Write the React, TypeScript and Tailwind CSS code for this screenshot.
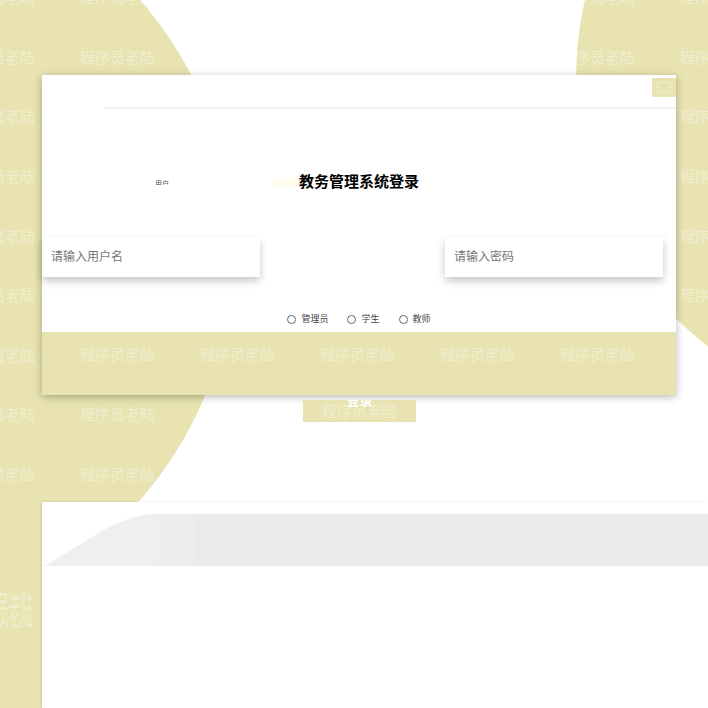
import React from "react";

// Login screen for the academic affairs system, with the repeated watermark over the yellow background blobs.

const YELLOW = "bg-[#e8e3b1]";
const WM_ROWS = 9;
const WM_COLS = 7;
const WATERMARK = "程序员老陆";

function WatermarkGrid() {
  return (
    <div className="absolute left-0 top-0 w-[708px] h-[502px] overflow-hidden pointer-events-none">
      <div className="flex flex-col mt-[-32px] ml-[-40px]">
        {Array.from({ length: WM_ROWS }).map((_, r) => (
          <div key={r} className="flex h-[59.6px] items-center">
            {Array.from({ length: WM_COLS }).map((_, c) => (
              <span
                key={c}
                className="w-[120px] shrink-0 text-[15px] leading-[15px] text-white/40 whitespace-nowrap"
              >
                {WATERMARK}
              </span>
            ))}
          </div>
        ))}
      </div>
    </div>
  );
}

function Radio({ label, last }: { label: string; last?: boolean }) {
  return (
    <label className={`flex items-center ${last ? "" : "mr-[19px]"}`}>
      <span className="w-[9px] h-[9px] rounded-full border border-[#666] bg-white" />
      <span className="ml-[5px] text-[9px] leading-[10px] text-[#444]">{label}</span>
    </label>
  );
}

function LoginCard() {
  return (
    <div className="w-[634px] h-[320px] flex flex-col bg-white shadow-[0_2px_8px_rgba(0,0,0,0.28)]">
      <div className="h-[257px] flex flex-col">
        <div className="h-[32px] flex justify-end">
          <div className={`mt-[3px] w-[24px] h-[19px] ${YELLOW} flex items-center justify-center`}>
            <span className="w-[14px] h-[11px] border border-white/40" />
          </div>
        </div>
        <div className="ml-[63px] h-[2px] bg-[#f1f1f1]" />

        <div className="mt-[63px] h-[20px] flex items-center pl-[113px]">
          <span className="w-[117px] text-[7px] leading-[7px] text-[#555] overflow-hidden h-[5px]">
            用户
          </span>
          <span className="w-[27px] h-[8px] bg-[#fffdf0]" />
          <h1 className="text-[15px] leading-[20px] font-bold text-black">教务管理系统登录</h1>
        </div>

        <div className="mt-[45px] flex justify-between pr-[13px]">
          <div className="w-[218px] h-[40px] bg-white shadow-[0_4px_8px_rgba(0,0,0,0.22)] flex items-center pl-[9px]">
            <span className="text-[12px] text-[#777]">请输入用户名</span>
          </div>
          <div className="w-[218px] h-[40px] bg-white shadow-[0_4px_8px_rgba(0,0,0,0.22)] flex items-center pl-[9px]">
            <span className="text-[12px] text-[#777]">请输入密码</span>
          </div>
        </div>

        <div className="mt-[37px] flex justify-center">
          <Radio label="管理员" />
          <Radio label="学生" />
          <Radio label="教师" last />
        </div>
      </div>

      <div className={`h-[63px] ${YELLOW} flex items-start pt-[15px] pl-[38px]`}>
        {[0, 1, 2, 3, 4].map((i) => (
          <span key={i} className="w-[120px] shrink-0 text-[15px] leading-[15px] text-white/40 whitespace-nowrap">
            {WATERMARK}
          </span>
        ))}
      </div>
    </div>
  );
}

export default function App() {
  return (
    <div
      className="relative w-[708px] h-[708px] overflow-hidden bg-white"
      style={{ fontFamily: '"Liberation Sans", "Noto Sans CJK SC", sans-serif' }}
    >
      {/* background blobs */}
      <div className={`absolute left-[-526px] top-[-130px] w-[760px] h-[760px] rounded-full ${YELLOW}`} />
      <div className={`absolute left-[576px] top-[-261px] w-[678px] h-[678px] rounded-full ${YELLOW}`} />
      <div className={`absolute left-0 top-0 w-[42px] h-[708px] ${YELLOW}`} />
      <WatermarkGrid />
      <span className="absolute left-[-3px] top-[592px] text-[12px] leading-[12px] text-white/40 scale-y-[3.3] origin-top whitespace-nowrap">
        员老陆
      </span>

      <div className="relative flex flex-col pt-[75px] pl-[42px]">
        <LoginCard />

        <button
          type="button"
          className={`relative ml-[261px] mt-[5px] w-[113px] h-[22px] ${YELLOW} overflow-hidden flex items-center justify-center`}
        >
          <span className="absolute top-[-6px] text-[13px] leading-[13px] font-bold text-white">登录</span>
          <span className="text-[15px] leading-[15px] text-white/40 whitespace-nowrap">{WATERMARK}</span>
        </button>

        <div className="mt-[80px] w-[666px] h-[206px] bg-white pt-[11px] shadow-[-1px_0_2px_rgba(0,0,0,0.12)]">
          <svg width="666" height="53" viewBox="0 0 666 53">
            <path d="M3 53 L62 17 Q92 1 122 1 L666 1 L666 53 Z" fill="#ebebeb" />
            <path d="M3 53 L62 17 Q92 1 112 1 L112 53 Z" fill="#efefef" />
            <rect x="112" y="1" width="40" height="52" fill="#eeeeee" />
          </svg>
        </div>
      </div>
    </div>
  );
}
